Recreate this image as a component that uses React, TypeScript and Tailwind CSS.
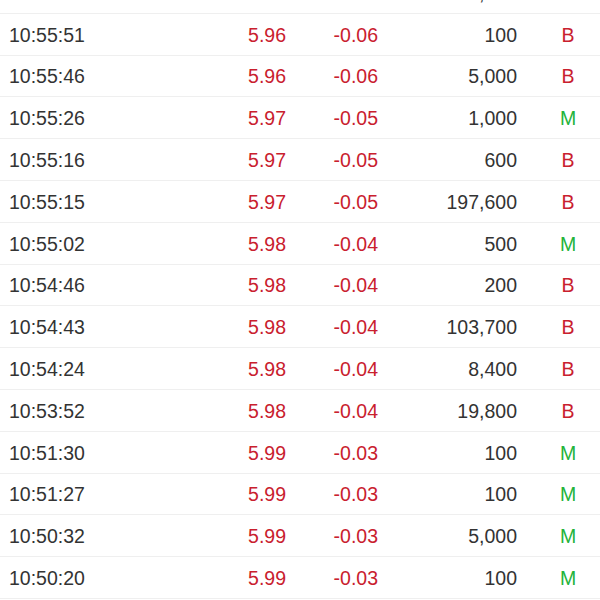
type Trade = {
  time: string
  price: string
  change: string
  volume: string
  side: 'B' | 'M'
}

const trades: Trade[] = [
  { time: '10:55:51', price: '5.96', change: '-0.06', volume: '100', side: 'B' },
  { time: '10:55:46', price: '5.96', change: '-0.06', volume: '5,000', side: 'B' },
  { time: '10:55:26', price: '5.97', change: '-0.05', volume: '1,000', side: 'M' },
  { time: '10:55:16', price: '5.97', change: '-0.05', volume: '600', side: 'B' },
  { time: '10:55:15', price: '5.97', change: '-0.05', volume: '197,600', side: 'B' },
  { time: '10:55:02', price: '5.98', change: '-0.04', volume: '500', side: 'M' },
  { time: '10:54:46', price: '5.98', change: '-0.04', volume: '200', side: 'B' },
  { time: '10:54:43', price: '5.98', change: '-0.04', volume: '103,700', side: 'B' },
  { time: '10:54:24', price: '5.98', change: '-0.04', volume: '8,400', side: 'B' },
  { time: '10:53:52', price: '5.98', change: '-0.04', volume: '19,800', side: 'B' },
  { time: '10:51:30', price: '5.99', change: '-0.03', volume: '100', side: 'M' },
  { time: '10:51:27', price: '5.99', change: '-0.03', volume: '100', side: 'M' },
  { time: '10:50:32', price: '5.99', change: '-0.03', volume: '5,000', side: 'M' },
  { time: '10:50:20', price: '5.99', change: '-0.03', volume: '100', side: 'M' },
]

const App = () => {
  return (
    <div className="h-[600px] w-[600px] overflow-hidden bg-white font-['Liberation_Sans',Arial,sans-serif] text-[19.5px]">
      <div className="mt-[-28px]">
        {/* previous row, scrolled mostly out of view: only the volume's comma shows */}
        <div className="flex h-[41.8px] items-center border-b border-[#efefef] pt-[2px]">
          <div className="w-[200px]" />
          <div className="w-[86px]" />
          <div className="w-[92px]" />
          <div className="w-[139px] text-right text-[#333333]">1,000</div>
        </div>
        {trades.map((t) => (
          <div key={t.time} className="flex h-[41.8px] items-center border-b border-[#efefef] pt-[2px]">
            <div className="w-[200px] pl-[9px] text-[#333333]">{t.time}</div>
            <div className="w-[86px] text-right text-[#c9202e]">{t.price}</div>
            <div className="w-[92px] text-right text-[#c9202e]">{t.change}</div>
            <div className="w-[139px] text-right text-[#333333]">{t.volume}</div>
            <div
              className={
                t.side === 'B'
                  ? 'ml-[21px] w-[60px] text-center text-[#c9202e]'
                  : 'ml-[21px] w-[60px] text-center text-[#22b33a]'
              }
            >
              {t.side}
            </div>
          </div>
        ))}
      </div>
    </div>
  )
}

export default App
